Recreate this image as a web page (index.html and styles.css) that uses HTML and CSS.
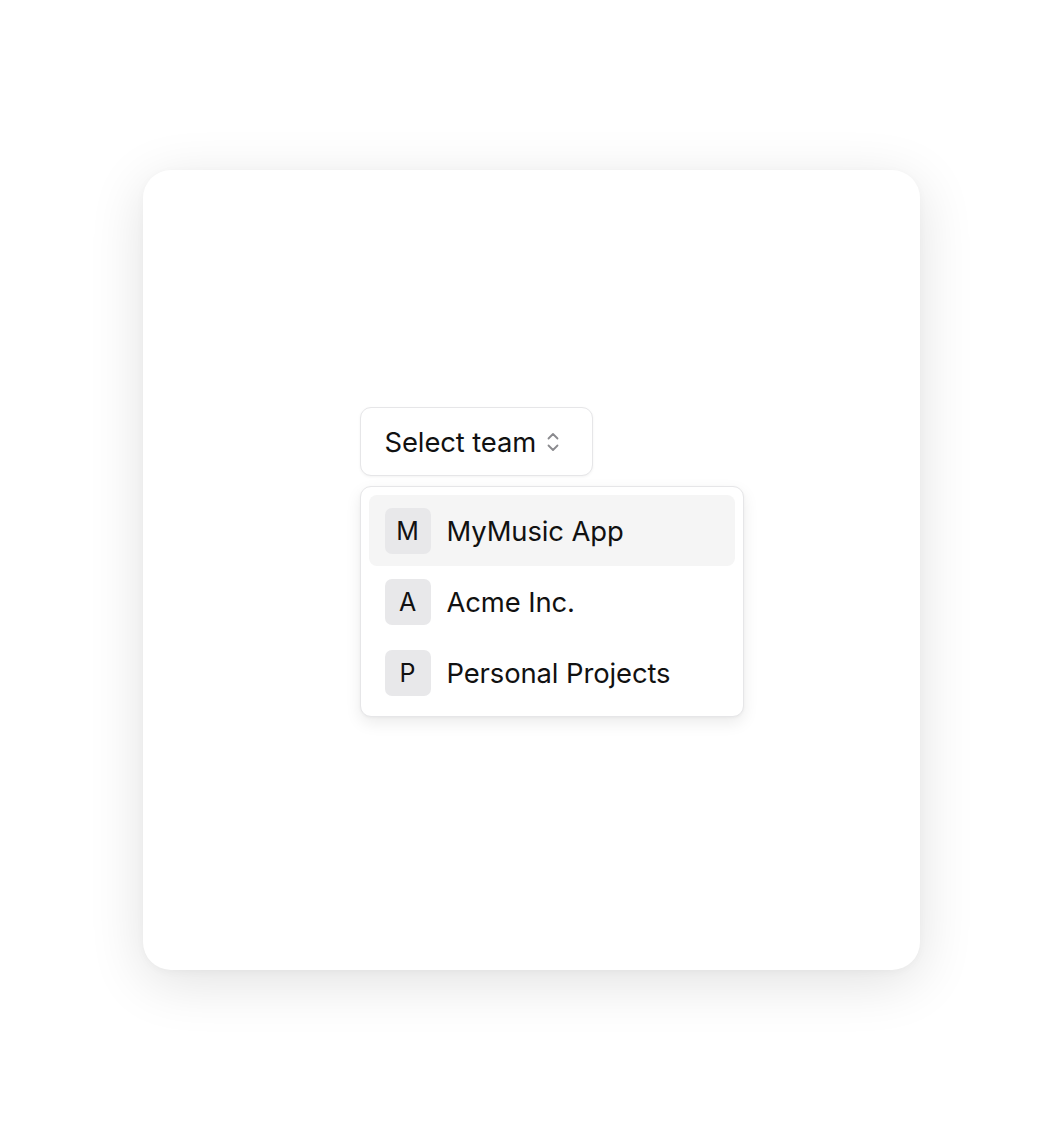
FILE: index.html
```html
<!DOCTYPE html>
<html>
<head>
<meta charset="utf-8">
<link rel="stylesheet" href="styles.css">
</head>
<body>
<div class="card">
  <div class="picker">
    <button class="trigger">
      <span class="trigger-label">Select team</span>
      <svg class="chev" width="14" height="24" viewBox="0 0 14 24" fill="none" stroke="#8a8a8e" stroke-width="1.8" stroke-linecap="round" stroke-linejoin="round">
        <path d="M2.5 8.5 L7 4 L11.5 8.5"/>
        <path d="M2.5 15.5 L7 20 L11.5 15.5"/>
      </svg>
    </button>
    <div class="menu">
      <div class="item active">
        <span class="avatar">M</span>
        <span class="name">MyMusic App</span>
      </div>
      <div class="item">
        <span class="avatar">A</span>
        <span class="name">Acme Inc.</span>
      </div>
      <div class="item">
        <span class="avatar">P</span>
        <span class="name">Personal Projects</span>
      </div>
    </div>
  </div>
</div>
</body>
</html>
```

FILE: styles.css
```css
html, body {
  margin: 0;
  padding: 0;
  background: #ffffff;
}
body {
  min-height: 100vh;
  display: flex;
  align-items: center;
  justify-content: center;
  font-family: Inter, "Liberation Sans", sans-serif;
  color: #111111;
}
.card {
  width: 777px;
  height: 800px;
  box-sizing: border-box;
  background: #ffffff;
  border-radius: 28px;
  box-shadow: 0 12px 56px rgba(0, 0, 0, 0.12), 0 2px 8px rgba(0, 0, 0, 0.03);
  padding: 237px 0 0 217px;
}
.picker {
  position: relative;
  display: inline-block;
}
.trigger {
  display: flex;
  align-items: center;
  gap: 10px;
  height: 69px;
  box-sizing: border-box;
  padding: 0 32px 0 24px;
  background: #ffffff;
  border: 1.5px solid #e6e6e8;
  border-radius: 11px;
  box-shadow: 0 1px 3px rgba(0, 0, 0, 0.05);
  font-family: inherit;
  font-size: 27.4px;
  color: #111111;
  cursor: pointer;
}
.trigger-label {
  letter-spacing: -0.1px;
}
.chev {
  display: block;
}
.menu {
  position: absolute;
  top: 79px;
  left: 0;
  width: 384px;
  box-sizing: border-box;
  padding: 8px;
  background: #ffffff;
  border: 1.5px solid #e6e6e8;
  border-radius: 11px;
  box-shadow: 0 6px 16px rgba(0, 0, 0, 0.08), 0 1px 3px rgba(0, 0, 0, 0.04);
}
.item {
  display: flex;
  align-items: center;
  gap: 16px;
  height: 71px;
  padding: 0 16px;
  border-radius: 8px;
}
.item.active {
  background: #f5f5f5;
}
.avatar {
  width: 46px;
  height: 46px;
  border-radius: 7px;
  background: #e8e8ea;
  display: flex;
  align-items: center;
  justify-content: center;
  font-size: 25px;
}
.name {
  font-size: 27.4px;
  letter-spacing: -0.1px;
}
```
